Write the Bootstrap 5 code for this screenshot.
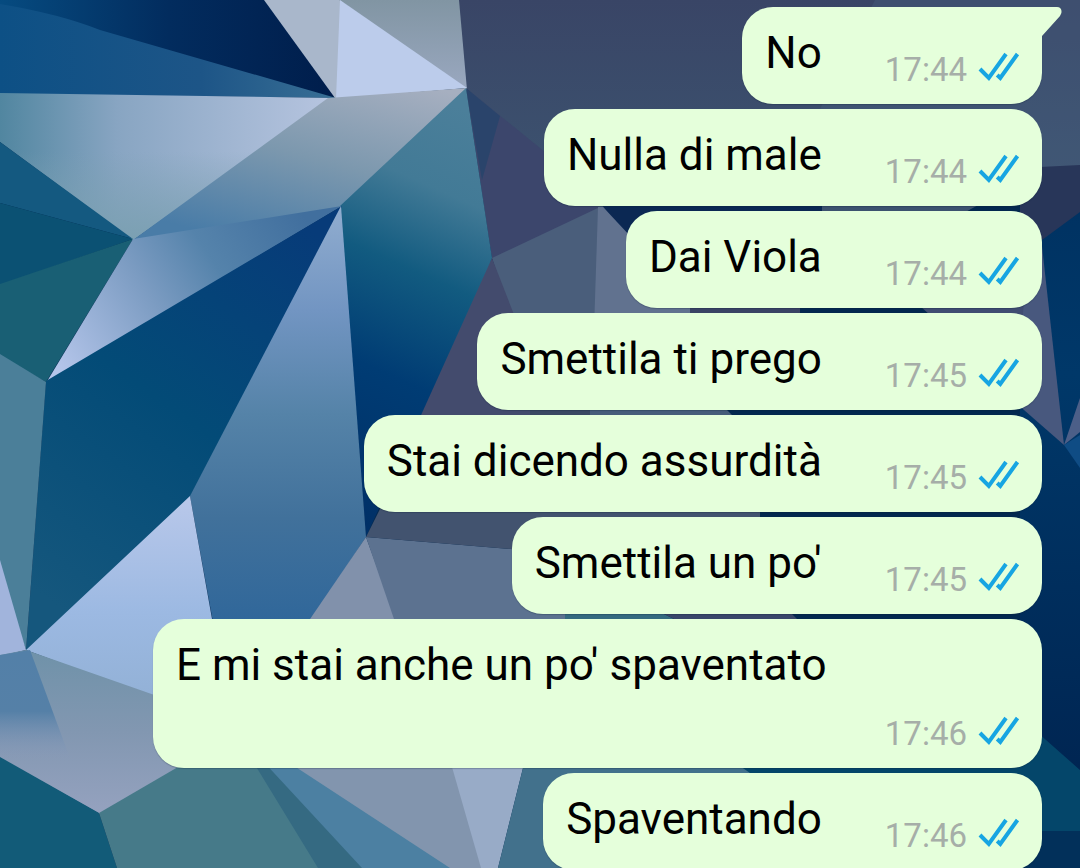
<!DOCTYPE html>
<html lang="it">
<head>
<meta charset="utf-8">
<meta name="viewport" content="width=device-width, initial-scale=1">
<title>Chat</title>
<link href="https://cdn.jsdelivr.net/npm/bootstrap@5.3.0/dist/css/bootstrap.min.css" rel="stylesheet">
<style>
  body { font-family: Roboto, "Noto Sans", sans-serif; background: #2c4670; }
  .wallpaper { z-index: 0; }
  .thread { z-index: 1; gap: 5px; padding: 7px 38px 0 153px; }
  .bubble { max-width: 100%; padding: 20px 22px 15px 23px; border-radius: 31px; background: #e5ffdb; box-shadow: 0 1px 1px rgba(10, 30, 50, .25); }
  .bubble-first { border-top-right-radius: 0; }
  .tail { left: 100%; top: 0; margin-left: -1px; }
  .msg-text { font-size: 44px; line-height: 52px; color: #000; margin-right: 63px; }
  .msg-meta { font-size: 33px; line-height: 39px; color: #a6aea8; padding-top: 23px; gap: 11px; }
</style>
</head>
<body class="vh-100 overflow-hidden position-relative">
<svg class="wallpaper position-absolute top-0 start-0 w-100 h-100" viewBox="0 0 1080 868" preserveAspectRatio="xMinYMin slice" aria-hidden="true">
  <defs>
    <linearGradient id="g1"><stop offset="0" stop-color="#064b80"/><stop offset=".5" stop-color="#022c5e"/><stop offset="1" stop-color="#001d4b"/></linearGradient>
    <linearGradient id="g2"><stop offset="0" stop-color="#0d5085"/><stop offset=".6" stop-color="#1d5587"/><stop offset="1" stop-color="#396f95"/></linearGradient>
    <linearGradient id="g5" x2="0" y2="1"><stop offset="0" stop-color="#8195a3"/><stop offset="1" stop-color="#9aa8c0"/></linearGradient>
    <linearGradient id="g6" x2="0" y2="1"><stop offset="0" stop-color="#394566"/><stop offset=".8" stop-color="#3c526f"/></linearGradient>
    <linearGradient id="g7"><stop offset="0" stop-color="#5186a0"/><stop offset=".35" stop-color="#88a5c2"/><stop offset="1" stop-color="#b7c5e0"/></linearGradient>
    <linearGradient id="g7b" x2="0" y2="1"><stop offset=".4" stop-color="#7ba0b2" stop-opacity="0"/><stop offset="1" stop-color="#7ba0b2"/></linearGradient>
    <linearGradient id="g8" x1=".9" y1="0" x2=".3" y2="1"><stop offset="0" stop-color="#a6afc0"/><stop offset=".5" stop-color="#7c98ae"/><stop offset="1" stop-color="#497ca7"/></linearGradient>
    <linearGradient id="g9" x1=".5" x2=".35" y2="1"><stop offset="0" stop-color="#4b7f9a"/><stop offset=".2" stop-color="#427a96"/><stop offset=".4" stop-color="#125b80"/><stop offset=".65" stop-color="#003c74"/><stop offset="1" stop-color="#003067"/></linearGradient>
    <linearGradient id="g12" gradientUnits="userSpaceOnUse" x1="300" y1="210" x2="60" y2="370"><stop offset="0" stop-color="#416f9e"/><stop offset=".35" stop-color="#5583ab"/><stop offset=".6" stop-color="#7c9cc2"/><stop offset="1" stop-color="#b4c5ea"/></linearGradient>
    <linearGradient id="g13" x1=".8" y1="0" x2=".3" y2="1"><stop offset="0" stop-color="#073b79"/><stop offset=".5" stop-color="#034b77"/><stop offset="1" stop-color="#15577d"/></linearGradient>
    <linearGradient id="g14" x2="0" y2="1"><stop offset="0" stop-color="#91adcf"/><stop offset=".25" stop-color="#7295c2"/><stop offset=".5" stop-color="#5583a8"/><stop offset=".75" stop-color="#41719b"/><stop offset="1" stop-color="#30679a"/></linearGradient>
    <linearGradient id="g17" x2="0" y2="1"><stop offset="0" stop-color="#b9c8ea"/><stop offset=".5" stop-color="#9cb9e2"/><stop offset="1" stop-color="#8faed2"/></linearGradient>
    <linearGradient id="g18" gradientUnits="userSpaceOnUse" x1="0" y1="655" x2="0" y2="780"><stop offset="0" stop-color="#5380a8"/><stop offset=".45" stop-color="#5580a7"/><stop offset=".85" stop-color="#8b9cbd" stop-opacity="0"/></linearGradient>
    <linearGradient id="g19" x2="0" y2="1"><stop offset="0" stop-color="#6f92a9"/><stop offset=".5" stop-color="#8297b1"/><stop offset="1" stop-color="#95a2bf"/></linearGradient>
    <linearGradient id="g32" x2="0" y2="1"><stop offset="0" stop-color="#003262"/><stop offset=".3" stop-color="#003869"/><stop offset="1" stop-color="#002552"/></linearGradient>
  </defs>
  <rect width="1080" height="868" fill="#03284f"/>
  <path d="M1020 200H1080V780H1020z" fill="url(#g32)"/>
  <path d="M458 0H1080V166L1042 170L960 215H600L466 88z" fill="url(#g6)"/>
  <path d="M875 0H1080V166L1042 168L980 109H820Q850 50 875 0z" fill="#486180" opacity=".35"/>
  <path d="M0 0H268L338 98L0 8z" fill="url(#g1)"/>
  <path d="M0 4Q60 14 100 30L336 98L0 94z" fill="url(#g2)"/>
  <path d="M264 0H343V98H335z" fill="#a9b7cb"/>
  <path d="M339 0H459L467 90z" fill="url(#g5)"/>
  <path d="M340 0L467 88L336 99z" fill="#bccceb"/>
  <path d="M0 93L334 98L133 240L0 142z" fill="url(#g7)"/>
  <path d="M0 93L334 98L133 240L0 142z" fill="url(#g7b)"/>
  <path d="M328 98L467 88L342 207L133 240z" fill="url(#g8)"/>
  <path d="M466 88L545 152L600 208L492 259z" fill="#3c466c"/>
  <path d="M466 88L500 116L482 180z" fill="#15436b" opacity=".45"/>
  <path d="M601 204H822V240H630z" fill="#0b2853"/>
  <path d="M492 258L600 207V330H515z" fill="#4a5e7b"/>
  <path d="M598 207H603L690 300V330H594z" fill="#61728f"/>
  <path d="M690 306H800V315H690z" fill="#3a4465"/>
  <path d="M920 306H1042V315H930z" fill="#404d72"/>
  <path d="M492 258L520 330L540 420H400z" fill="#434b6d"/>
  <path d="M530 408H590V418H530z" fill="#3a4863"/>
  <path d="M590 408H725L735 418H590z" fill="#465d7a"/>
  <path d="M466 88L492 258L366 537L340 206z" fill="url(#g9)"/>
  <path d="M0 142L133 239L0 203z" fill="#145980"/>
  <path d="M0 203L133 239L0 285z" fill="#0b5173"/>
  <path d="M0 284L133 239L46 382L0 356z" fill="#195f74"/>
  <path d="M133 239L342 206L46 383z" fill="url(#g12)"/>
  <path d="M342 206L190 497L26 651L46 381z" fill="url(#g13)"/>
  <path d="M341 206L366 537L310 622H213L190 496z" fill="url(#g14)"/>
  <path d="M0 354L46 382L26 650L0 575z" fill="#4b7f99"/>
  <path d="M0 560L26 650L0 656z" fill="#a1b4dc"/>
  <path d="M190 496L214 630L240 730L26 650z" fill="url(#g17)"/>
  <path d="M0 655L26 650L240 725L185 768L100 814L0 758z" fill="url(#g19)"/>
  <path d="M0 655L30 650L78 780L46 784L0 758z" fill="url(#g18)"/>
  <path d="M0 757L99 813L117 868H0z" fill="#125b78"/>
  <path d="M99 813L190 760H260L322 868H117z" fill="#467a89"/>
  <path d="M252 760H265L370 868H318z" fill="#356a82"/>
  <path d="M262 760H290L460 868H362z" fill="#4c80a2"/>
  <path d="M285 760H452L482 868H450z" fill="#8295ae"/>
  <path d="M450 760H525L498 868H481z" fill="#98abc7"/>
  <path d="M525 760H740L760 780V868H498z" fill="#42718c"/>
  <path d="M366 537L308 622H397z" fill="#8191ab"/>
  <path d="M366 537L560 553L570 622H395z" fill="#5c7290"/>
  <path d="M366 537L382 505H760V518L560 553z" fill="#42536f"/>
  <path d="M565 612H660L680 622H565z" fill="#356a80"/>
  <path d="M660 612H790L800 622H680z" fill="#39466a"/>
  <path d="M1020 168L1080 165V212L1042 240L1020 215z" fill="#283659"/>
  <path d="M1030 236L1042 246L1064 445L1015 402z" fill="#48587e"/>
  <path d="M1064 445L1080 398V432z" fill="#4c5f88"/>
  <path d="M1064 445L1080 435V468z" fill="#0f4c84"/>
  <path d="M740 766L1020 760V717L1080 770V831H1042L760 780z" fill="#04466a"/>
  <path d="M1020 831H1080V868H1020z" fill="#02305a"/>
</svg>

<main class="thread position-relative d-flex flex-column align-items-end">
  <div class="bubble bubble-first position-relative d-flex flex-wrap">
    <span class="msg-text">No</span>
    <span class="msg-meta d-flex ms-auto"><time>17:44</time><svg width="42" height="39" viewBox="0 0 42 39" role="img" aria-label="Letto"><use href="#ticks"/></svg></span>
    <svg class="tail position-absolute" width="22" height="32" viewBox="0 0 22 32" aria-hidden="true"><path d="M0 0H16Q20 0 20.500 4Q21 6 19 9L1 29V32H0z" fill="#e5ffdb"/></svg>
  </div>
  <div class="bubble d-flex flex-wrap">
    <span class="msg-text">Nulla di male</span>
    <span class="msg-meta d-flex ms-auto"><time>17:44</time><svg width="42" height="39" viewBox="0 0 42 39" role="img" aria-label="Letto"><use href="#ticks"/></svg></span>
  </div>
  <div class="bubble d-flex flex-wrap">
    <span class="msg-text">Dai Viola</span>
    <span class="msg-meta d-flex ms-auto"><time>17:44</time><svg width="42" height="39" viewBox="0 0 42 39" role="img" aria-label="Letto"><use href="#ticks"/></svg></span>
  </div>
  <div class="bubble d-flex flex-wrap">
    <span class="msg-text">Smettila ti prego</span>
    <span class="msg-meta d-flex ms-auto"><time>17:45</time><svg width="42" height="39" viewBox="0 0 42 39" role="img" aria-label="Letto"><use href="#ticks"/></svg></span>
  </div>
  <div class="bubble d-flex flex-wrap">
    <span class="msg-text">Stai dicendo assurdità</span>
    <span class="msg-meta d-flex ms-auto"><time>17:45</time><svg width="42" height="39" viewBox="0 0 42 39" role="img" aria-label="Letto"><use href="#ticks"/></svg></span>
  </div>
  <div class="bubble d-flex flex-wrap">
    <span class="msg-text">Smettila un po'</span>
    <span class="msg-meta d-flex ms-auto"><time>17:45</time><svg width="42" height="39" viewBox="0 0 42 39" role="img" aria-label="Letto"><use href="#ticks"/></svg></span>
  </div>
  <div class="bubble d-flex flex-wrap">
    <span class="msg-text">E mi stai anche un po' spaventato</span>
    <span class="msg-meta d-flex ms-auto"><time>17:46</time><svg width="42" height="39" viewBox="0 0 42 39" role="img" aria-label="Letto"><use href="#ticks"/></svg></span>
  </div>
  <div class="bubble d-flex flex-wrap">
    <span class="msg-text">Spaventando</span>
    <span class="msg-meta d-flex ms-auto"><time>17:46</time><svg width="42" height="39" viewBox="0 0 42 39" role="img" aria-label="Letto"><use href="#ticks"/></svg></span>
  </div>
</main>
<svg class="position-absolute" width="0" height="0" aria-hidden="true">
  <symbol id="ticks" viewBox="0 0 42 39"><path d="M2 19L10.800 28L28 4M19.200 25L22.300 28L39.500 4" fill="none" stroke="#17a5e2" stroke-width="4"/></symbol>
</svg>
<script src="https://cdn.jsdelivr.net/npm/bootstrap@5.3.0/dist/js/bootstrap.bundle.min.js"></script>
</body>
</html>
